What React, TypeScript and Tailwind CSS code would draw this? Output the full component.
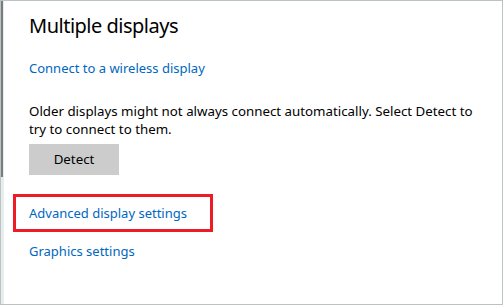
const font = { fontFamily: '"Noto Sans", "Open Sans", sans-serif' };

export default function App() {
  return (
    <div
      className="flex h-[305px] w-[503px] border border-[#b9c3c3] bg-white text-black"
      style={font}
    >
      <div className="flex w-[3px] flex-col bg-[#e8ecec]">
        <div className="h-[176px] w-[2px] bg-[#7b7b7b]" />
      </div>
      <div className="flex flex-col pl-[25px]">
        <h1 className="mt-[11px] h-[28px] text-[20px] leading-[28px] font-normal tracking-[-0.5px]">
          Multiple displays
        </h1>
        <a href="#" className="mt-[18px] h-[20px] text-[13px] leading-[20px] text-[#0067c0]">
          Connect to a wireless display
        </a>
        <p className="mt-[24px] w-[448px] text-[13.3px] leading-[18px]">
          Older displays might not always connect automatically. Select Detect to try to connect to them.
        </p>
        <button className="mt-[6px] flex h-[31px] w-[90px] items-center justify-center bg-[#cccccc] text-[13.3px]">
          Detect
        </button>
        <div className="mt-[19px] -ml-[16px] flex h-[38px] w-[200px] items-center border-[3px] border-[#ed1c24] pl-[13px]">
          <a href="#" className="text-[13px] leading-[20px] text-[#0067c0]">
            Advanced display settings
          </a>
        </div>
        <a href="#" className="mt-[9px] h-[20px] text-[13px] leading-[20px] text-[#0067c0]">
          Graphics settings
        </a>
      </div>
    </div>
  );
}
